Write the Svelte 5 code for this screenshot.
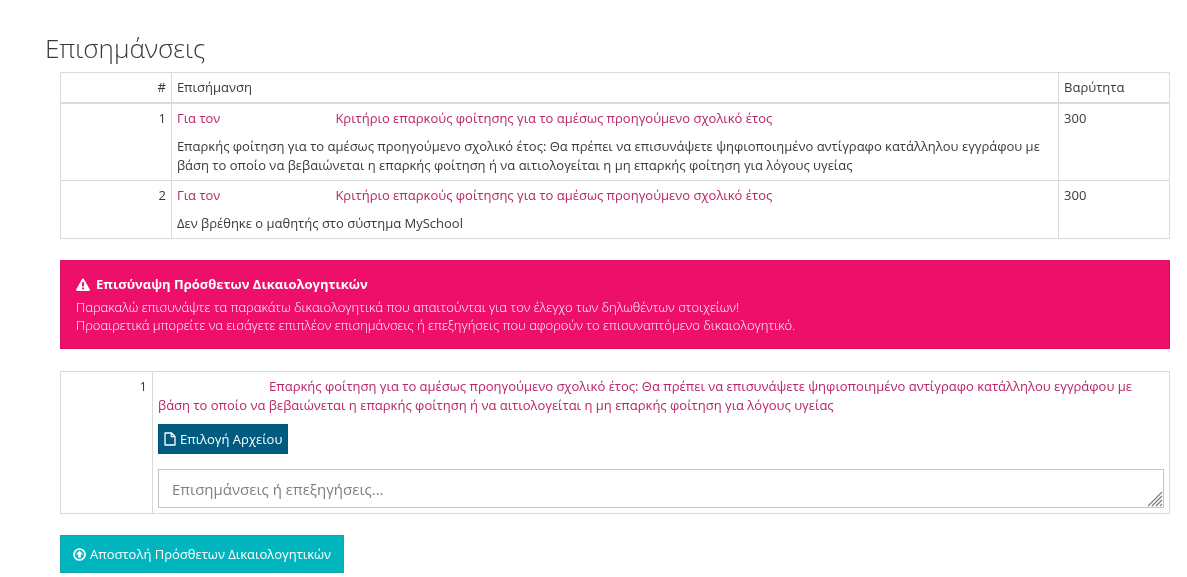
<!--
  Επισημάνσεις

  Lists the remarks for an application and lets the applicant attach
  the additional documents that were asked for.
-->
<script lang="ts">
	interface Remark {
		id: number;
		criterion: string;
		text: string;
		weight: number;
	}

	interface Attachment {
		id: number;
		text: string;
		comment: string;
	}

	const attendance =
		'Επαρκής φοίτηση για το αμέσως προηγούμενο σχολικό έτος: Θα πρέπει να επισυνάψετε ψηφιοποιημένο αντίγραφο κατάλληλου εγγράφου με βάση το οποίο να βεβαιώνεται η επαρκής φοίτηση ή να αιτιολογείται η μη επαρκής φοίτηση για λόγους υγείας';
	const criterion = 'Κριτήριο επαρκούς φοίτησης για το αμέσως προηγούμενο σχολικό έτος';

	const remarks: Remark[] = [
		{ id: 1, criterion, text: attendance, weight: 300 },
		{ id: 2, criterion, text: 'Δεν βρέθηκε ο μαθητής στο σύστημα MySchool', weight: 300 }
	];

	let attachments: Attachment[] = $state([{ id: 1, text: attendance, comment: '' }]);
</script>

<main class="page">
	<h1 class="title">Επισημάνσεις</h1>

	<form class="content" onsubmit={(e) => e.preventDefault()}>
		<table class="grid">
			<thead>
				<tr>
					<th class="col-index">#</th>
					<th>Επισήμανση</th>
					<th class="col-weight">Βαρύτητα</th>
				</tr>
			</thead>
			<tbody>
				{#each remarks as remark (remark.id)}
					<tr>
						<td class="col-index">{remark.id}</td>
						<td>
							<p class="highlight">Για τον<span class="student-name"></span>{remark.criterion}</p>
							<p class="description">{remark.text}</p>
						</td>
						<td class="col-weight">{remark.weight}</td>
					</tr>
				{/each}
			</tbody>
		</table>

		<div class="alert" role="alert">
			<h2 class="alert-title">
				<svg class="alert-icon" viewBox="0 0 14 13" aria-hidden="true">
					<path
						fill="currentColor"
						fill-rule="evenodd"
						d="M7 0.4c.4 0 .7.2.9.5l5.9 10.6c.4.7-.1 1.4-.9 1.4H1.1c-.8 0-1.3-.7-.9-1.4L6.1.9C6.3.6 6.6.4 7 .4zM5.9 4.3l.2 4.3h1.8l.2-4.3zM6 9.5v1.7h2V9.5z"
					/>
				</svg>
				Επισύναψη Πρόσθετων Δικαιολογητικών
			</h2>
			<p>Παρακαλώ επισυνάψτε τα παρακάτω δικαιολογητικά που απαιτούνται για τον έλεγχο των δηλωθέντων στοιχείων!</p>
			<p>Προαιρετικά μπορείτε να εισάγετε επιπλέον επισημάνσεις ή επεξηγήσεις που αφορούν το επισυναπτόμενο δικαιολογητικό.</p>
		</div>

		<table class="grid">
			<tbody>
				{#each attachments as attachment (attachment.id)}
					<tr>
						<td class="col-number">{attachment.id}</td>
						<td>
							<p class="highlight"><span class="student-label"></span>{attachment.text}</p>
							<button type="button" class="btn btn-file">
								<svg class="file-icon" viewBox="0 0 12 14" aria-hidden="true">
									<path
										fill="none"
										stroke="currentColor"
										stroke-width="1.3"
										stroke-linejoin="round"
										d="M1 1h6.5L11 4.5V13H1zM7.3 1v3.7H11"
									/>
								</svg>
								Επιλογή Αρχείου
							</button>
							<textarea
								class="comment"
								rows="1"
								aria-label="Επισημάνσεις ή επεξηγήσεις"
								placeholder="Επισημάνσεις ή επεξηγήσεις..."
								bind:value={attachment.comment}
							></textarea>
						</td>
					</tr>
				{/each}
			</tbody>
		</table>

		<button type="submit" class="btn btn-submit">
			<svg class="submit-icon" viewBox="0 0 13 13" aria-hidden="true">
				<circle cx="6.5" cy="6.5" r="5.5" fill="none" stroke="currentColor" stroke-width="1.7" />
				<path fill="currentColor" d="M6.5 2.6L10.2 6.4H7.8v3.4H5.2V6.4H2.8z" />
			</svg>
			Αποστολή Πρόσθετων Δικαιολογητικών
		</button>
	</form>
</main>

<style>
	:global(body) {
		margin: 0;
		background: #fff;
	}

	.page {
		padding: 30px 17px 4px 45px;
		font-family: 'Open Sans', 'Noto Sans', sans-serif;
		font-size: 13px;
		line-height: 19px;
		color: #373a3c;
	}

	.title {
		margin: 0 0 6px;
		font-size: 26px;
		font-weight: 300;
		line-height: 36px;
	}

	.content {
		padding-left: 15px;
	}

	p {
		margin: 0;
	}

	.grid {
		width: 100%;
		table-layout: fixed;
		border-collapse: collapse;
		margin-bottom: 21px;
	}

	th,
	td {
		padding: 5px;
		border: 1px solid #d9dbdc;
		font-weight: 400;
		text-align: left;
		vertical-align: top;
	}

	th {
		border-bottom-width: 2px;
	}

	.col-index,
	.col-weight {
		width: 10%;
		box-sizing: border-box;
	}

	.col-number {
		width: 92px;
		box-sizing: border-box;
	}

	.col-index,
	.col-number {
		text-align: right;
	}

	.highlight {
		color: #b92567;
	}

	.student-name,
	.student-label {
		display: inline-block;
		width: 115px;
	}

	.student-label {
		width: 111px;
	}

	.description {
		margin-top: 9px;
	}

	.alert {
		margin-bottom: 22px;
		padding: 14px 15px;
		border: 1px solid #d3125f;
		background: #ed0f69;
		color: #fff;
		font-weight: 300;
		line-height: 18px;
	}

	.alert-title {
		display: flex;
		align-items: center;
		gap: 6px;
		margin: 0 0 5px;
		font-size: 13px;
		font-weight: 700;
		line-height: 18px;
	}

	.alert-icon {
		width: 14px;
		height: 13px;
	}

	.btn {
		display: flex;
		align-items: center;
		gap: 4px;
		border: 1px solid transparent;
		color: #fff;
		font: inherit;
		cursor: pointer;
	}

	.btn-file {
		margin: 9px 0 15px;
		padding: 5px;
		border-color: #00567a;
		background: #005b80;
		line-height: 18px;
	}

	.file-icon {
		width: 12px;
		height: 14px;
	}

	.comment {
		display: block;
		box-sizing: border-box;
		width: 100%;
		height: 39px;
		padding: 8px 13px;
		border: 1px solid #c3c6c8;
		border-radius: 0;
		color: #55595c;
		font: inherit;
		font-size: 15px;
		line-height: 22px;
		resize: vertical;
	}

	.comment::placeholder {
		color: #7d8184;
	}

	.comment::-webkit-resizer {
		background: url("data:image/svg+xml,%3Csvg xmlns='http://www.w3.org/2000/svg' width='15' height='15'%3E%3Cpath d='M0 14L14 0M4 14L14 4M8 14l6-6M12 14l2-2' stroke='%23777' stroke-width='1.2' fill='none'/%3E%3C/svg%3E")
			no-repeat right bottom;
	}

	.btn-submit {
		padding: 9px 12px;
		border-color: #12a7af;
		background: #00b5bd;
		line-height: 18px;
	}

	.submit-icon {
		width: 13px;
		height: 13px;
	}
</style>
